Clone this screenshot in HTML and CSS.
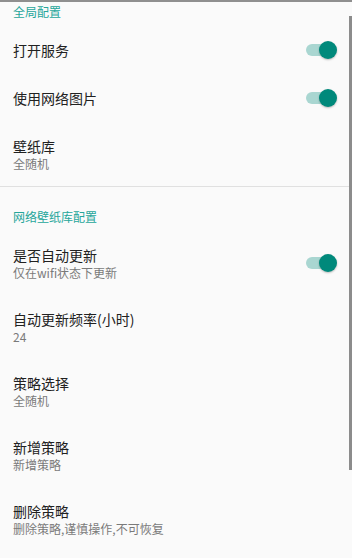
FILE: index.html
```html
<!DOCTYPE html>
<html lang="zh">
<head>
<meta charset="utf-8">
<link rel="stylesheet" href="styles.css">
</head>
<body>
<div class="screen">
  <div class="topbar"></div>
  <div class="cat cat-first">全局配置</div>
  <div class="row row-single">
    <div class="text"><div class="title">打开服务</div></div>
    <div class="switch"><span class="track"></span><span class="thumb"></span></div>
  </div>
  <div class="row row-single">
    <div class="text"><div class="title">使用网络图片</div></div>
    <div class="switch"><span class="track"></span><span class="thumb"></span></div>
  </div>
  <div class="row">
    <div class="text"><div class="title">壁纸库</div><div class="summary">全随机</div></div>
  </div>
  <div class="divider"></div>
  <div class="cat cat-second">网络壁纸库配置</div>
  <div class="row">
    <div class="text"><div class="title">是否自动更新</div><div class="summary">仅在wifi状态下更新</div></div>
    <div class="switch"><span class="track"></span><span class="thumb"></span></div>
  </div>
  <div class="row">
    <div class="text"><div class="title">自动更新频率(小时)</div><div class="summary">24</div></div>
  </div>
  <div class="row">
    <div class="text"><div class="title">策略选择</div><div class="summary">全随机</div></div>
  </div>
  <div class="row">
    <div class="text"><div class="title">新增策略</div><div class="summary">新增策略</div></div>
  </div>
  <div class="row">
    <div class="text"><div class="title">删除策略</div><div class="summary">删除策略,谨慎操作,不可恢复</div></div>
  </div>
  <div class="scrollbar"></div>
</div>
</body>
</html>
```
FILE: styles.css
```css
html, body {
  margin: 0;
  padding: 0;
  background: #fafafa;
}
body {
  font-family: "Noto Sans CJK SC", "Noto Sans", Roboto, sans-serif;
  width: 352px;
  height: 558px;
  overflow: hidden;
}
.screen {
  position: relative;
  width: 352px;
  height: 558px;
  background: #fafafa;
}
.topbar {
  height: 2px;
  background: #8f8f8f;
}
.cat {
  font-size: 12px;
  line-height: 16px;
  color: #26a69a;
  padding-left: 13px;
}
.cat-first {
  height: 24px;
  padding-top: 2px;
  box-sizing: border-box;
}
.cat-second {
  height: 44px;
  padding-top: 22px;
  box-sizing: border-box;
}
.row {
  height: 64px;
  display: flex;
  align-items: center;
  padding-left: 13px;
  padding-right: 16px;
}
.row-single {
  height: 48px;
}
.text {
  flex: 1;
  display: flex;
  flex-direction: column;
}
.title {
  font-size: 14px;
  line-height: 19px;
  color: #212121;
}
.summary {
  font-size: 12px;
  line-height: 16px;
  color: #7a7a7a;
}
.divider {
  height: 1px;
  background: #e0e0e0;
}
.switch {
  position: relative;
  width: 31px;
  height: 18px;
  margin-right: -1px;
}
.track {
  position: absolute;
  left: 0;
  top: 3px;
  width: 28px;
  height: 12px;
  border-radius: 6px;
  background: #a9d6d1;
}
.thumb {
  position: absolute;
  right: 0;
  top: 0;
  width: 18px;
  height: 18px;
  border-radius: 50%;
  background: #00897b;
  box-shadow: 0 1px 2px rgba(0, 0, 0, 0.25);
}
.scrollbar {
  position: absolute;
  right: 0;
  top: 16px;
  width: 3px;
  height: 454px;
  background: #8c8c8c;
}
```
